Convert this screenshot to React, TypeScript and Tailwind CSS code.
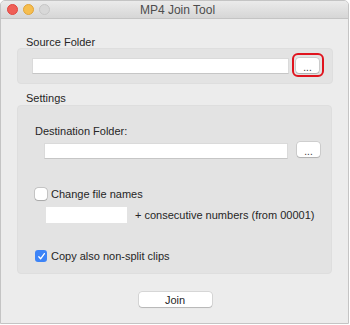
import React from "react";

const font = { fontFamily: '"Liberation Sans", Arial, sans-serif' };

function Field({ className = "" }: { className?: string }) {
  return (
    <div
      className={
        "h-[16px] bg-white border border-[#dadada] border-b-[#c6c6c6] " + className
      }
    />
  );
}

function DotsButton() {
  return (
    <div className="w-[23px] h-[15px] bg-white rounded-[3px] shadow-[0_0_0_0.5px_rgba(0,0,0,0.18),0_1px_1px_rgba(0,0,0,0.15)] flex items-end justify-center">
      <span className="text-[10px] leading-[11px] text-[#333]">...</span>
    </div>
  );
}

function Checkbox({ checked = false }: { checked?: boolean }) {
  if (checked) {
    return (
      <div className="w-[12px] h-[12px] rounded-[3px] bg-[#3d84f7] flex items-center justify-center shrink-0">
        <svg width="9" height="9" viewBox="0 0 9 9">
          <path d="M1.8 4.8 L3.6 6.8 L7.4 1.6" fill="none" stroke="white" strokeWidth="1.3" strokeLinecap="round" strokeLinejoin="round" />
        </svg>
      </div>
    );
  }
  return (
    <div className="w-[12px] h-[12px] rounded-[3px] bg-white shadow-[0_0_0_0.5px_rgba(0,0,0,0.25),0_0.5px_1px_rgba(0,0,0,0.15)] shrink-0" />
  );
}

export default function App() {
  return (
    <div className="w-[350px] h-[325px] bg-white" style={font}>
      <div className="w-[349px] h-[324px] bg-[#ececec] border border-[#c4c4c4] rounded-t-[5px] overflow-hidden flex flex-col text-[#262626]">
        {/* Title bar */}
        <div className="h-[18px] shrink-0 bg-gradient-to-b from-[#ebebeb] to-[#d6d6d6] border-b border-[#c4c4c4] relative flex items-center">
          <div className="flex items-center gap-[5px] pl-[6px]">
            <div className="w-[11px] h-[11px] rounded-full bg-[#ef5f57] border border-[#e14640]" />
            <div className="w-[11px] h-[11px] rounded-full bg-[#f6be4f] border border-[#dfa33a]" />
            <div className="w-[11px] h-[11px] rounded-full bg-[#d8d8d8] border border-[#c6c6c6]" />
          </div>
          <div className="absolute inset-0 flex items-center justify-center pl-[6px] text-[12px] text-[#4d4d4d]">
            MP4 Join Tool
          </div>
        </div>

        <div className="flex flex-col pl-[16px] pr-[15px]">
          {/* Source Folder */}
          <div className="text-[11px] leading-[12px] pl-[9px] mt-[17px]">Source Folder</div>
          <div className="h-[36px] bg-[#e3e3e3] rounded-[4px] border border-[#dedede] flex items-start pt-[9px] pl-[14px] gap-[7px]">
            <Field className="w-[257px]" />
            <div className="relative">
              <DotsButton />
              <div className="absolute left-[-4px] top-[-5px] w-[32px] h-[24px] rounded-[6px] border-2 border-[#e0141e]" />
            </div>
          </div>

          {/* Settings */}
          <div className="text-[11px] leading-[12px] pl-[9px] mt-[8px]">Settings</div>
          <div className="mt-[1px] h-[169px] w-[315px] bg-[#e3e3e3] rounded-[4px] border border-[#dedede] flex flex-col pl-[17px] pt-[19px]">
            <div className="text-[11px] leading-[12px]">Destination Folder:</div>
            <div className="flex items-start gap-[9px] mt-[6px] pl-[9px]">
              <Field className="w-[244px]" />
              <div className="-mt-[1px]">
                <DotsButton />
              </div>
            </div>

            <div className="flex items-center gap-[4px] mt-[29px] h-[12px]">
              <Checkbox />
              <span className="text-[11px] leading-[12px]">Change file names</span>
            </div>
            <div className="flex items-center gap-[8px] mt-[7px] pl-[11px]">
              <div className="w-[81px] h-[16px] bg-white" />
              <span className="text-[11px] leading-[12px]">+ consecutive numbers (from 00001)</span>
            </div>

            <div className="flex items-center gap-[4px] mt-[27px] h-[12px]">
              <Checkbox checked />
              <span className="text-[11px] leading-[12px]">Copy also non-split clips</span>
            </div>
          </div>

          {/* Join */}
          <div className="flex justify-center mt-[18px]">
            <div className="w-[73px] h-[15px] bg-white rounded-[3px] shadow-[0_0_0_0.5px_rgba(0,0,0,0.18),0_1px_1px_rgba(0,0,0,0.15)] flex items-center justify-center text-[11px] leading-[12px]">
              Join
            </div>
          </div>
        </div>
      </div>
    </div>
  );
}
